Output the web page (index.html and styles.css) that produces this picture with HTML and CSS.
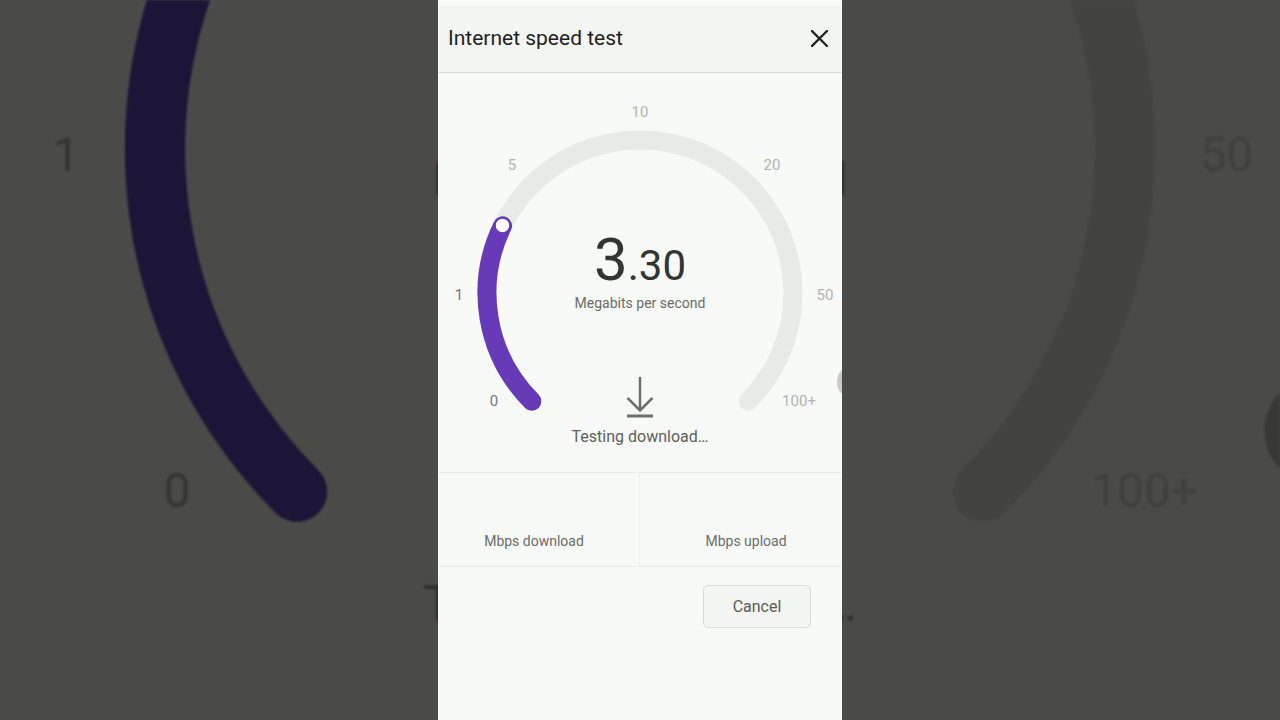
FILE: index.html
```html
<!DOCTYPE html>
<html lang="en">
<head>
<meta charset="utf-8">
<title>Internet speed test</title>
<link rel="stylesheet" href="styles.css">
</head>
<body>
<svg class="backdrop" viewBox="0 0 1280 720" width="1280" height="720" aria-hidden="true">
  <g transform="translate(640 155) scale(3.17) translate(-640 -295)">
    <path d="M531.81 401.19 A153 153 0 1 1 748.19 401.19" fill="none" stroke="#434441" stroke-width="19" stroke-linecap="round"/>
    <path d="M531.81 401.19 A153 153 0 0 1 502.5 225.9" fill="none" stroke="#1e1437" stroke-width="19" stroke-linecap="round"/>
    <circle cx="854" cy="382" r="17" fill="#383937"/>
    <g class="bg-labels">
      <text x="459" y="295" class="bg-on">1</text>
      <text x="494" y="401" class="bg-on">0</text>
      <text x="825" y="295" class="bg-off">50</text>
      <text x="799" y="401" class="bg-off">100+</text>
    </g>
    <text x="640" y="307.5" class="bg-unit">Megabits per second</text>
    <text x="640" y="442" class="bg-status">Testing download…</text>
  </g>
</svg>

<main class="phone">
  <div class="strip"></div>
  <header class="bar">
    <h1 class="title">Internet speed test</h1>
    <button class="close" aria-label="Close">
      <svg width="17" height="17" viewBox="0 0 17 17"><path d="M1 1 L16 16 M16 1 L1 16" stroke="#222" stroke-width="2.3" stroke-linecap="square"/></svg>
    </button>
  </header>

  <section class="gauge">
    <svg class="dial" width="404" height="399" viewBox="438 73 404 399">
      <path d="M531.81 401.19 A153 153 0 1 1 748.19 401.19" fill="none" stroke="#e8eae7" stroke-width="19" stroke-linecap="round"/>
      <path d="M531.81 401.19 A153 153 0 0 1 502.5 225.9" fill="none" stroke="#673ab7" stroke-width="19" stroke-linecap="round"/>
      <circle cx="502.5" cy="225.4" r="7.5" fill="#ffffff" stroke="#673ab7" stroke-width="1.5"/>
      <circle cx="854" cy="382" r="17" fill="#c9cac8"/>
      <g class="ticks">
        <text x="494" y="401" class="on">0</text>
        <text x="459" y="295" class="on">1</text>
        <text x="512" y="165">5</text>
        <text x="640" y="112">10</text>
        <text x="772" y="165">20</text>
        <text x="825" y="295">50</text>
        <text x="799" y="401">100+</text>
      </g>
    </svg>
    <div class="readout">
      <div class="value">3<span class="frac">.30</span></div>
      <div class="unit">Megabits per second</div>
      <svg class="dl-icon" width="28" height="42" viewBox="0 0 28 42">
        <path d="M14 0 V33.5 M1.5 21 L14 33.5 L26.5 21" fill="none" stroke="#6b706d" stroke-width="2.5"/>
        <path d="M1 39 H27" stroke="#6b706d" stroke-width="3"/>
      </svg>
      <div class="status">Testing download…</div>
    </div>
  </section>

  <section class="stats">
    <div class="stat stat-down"><span class="stat-label">Mbps download</span></div>
    <div class="stat stat-up"><span class="stat-label">Mbps upload</span></div>
  </section>

  <footer class="actions">
    <button class="cancel">Cancel</button>
  </footer>
</main>
</body>
</html>
```

FILE: styles.css
```css
html, body {
  margin: 0;
  padding: 0;
  height: 100%;
}

body {
  background: #4a4b48;
  font-family: Roboto, "Noto Sans", "Liberation Sans", sans-serif;
  display: flex;
  justify-content: center;
  overflow: hidden;
  position: relative;
}

.backdrop {
  position: absolute;
  left: 0;
  top: 0;
  filter: blur(0.8px);
}

.bg-labels text,
.bg-unit,
.bg-status {
  font-family: Roboto, "Noto Sans", sans-serif;
  text-anchor: middle;
  dominant-baseline: central;
}

.bg-labels text { font-size: 15px; }
.bg-on { fill: #343533; }
.bg-off { fill: #40413e; }

.bg-unit {
  font-size: 14px;
  fill: #2f302e;
  dominant-baseline: auto;
}

.bg-status {
  font-size: 16px;
  fill: #2f302e;
  dominant-baseline: auto;
}

.phone {
  position: relative;
  z-index: 1;
  width: 404px;
  height: 720px;
  background: #f7faf6;
  display: flex;
  flex-direction: column;
  overflow: hidden;
}

.strip {
  height: 6px;
  background: #f9fbf9;
}

.bar {
  height: 66px;
  background: #f2f5f2;
  border-bottom: 1px solid #d8dbd8;
  display: flex;
  align-items: center;
  justify-content: space-between;
  padding: 0 14px 0 10px;
}

.title {
  margin: 0;
  font-size: 21px;
  font-weight: 400;
  color: #1f1f1f;
  line-height: 24px;
  padding-bottom: 3px;
}

.close {
  border: 0;
  background: none;
  padding: 0;
  width: 17px;
  height: 17px;
  display: flex;
  margin-bottom: 2px;
}

.gauge {
  height: 399px;
  display: grid;
}

.gauge > * {
  grid-area: 1 / 1;
}

.ticks text {
  font-family: Roboto, "Noto Sans", sans-serif;
  font-size: 15px;
  fill: #b2b3b1;
  text-anchor: middle;
  dominant-baseline: central;
}

.ticks text.on {
  fill: #767776;
}

.readout {
  display: flex;
  flex-direction: column;
  align-items: center;
  padding-top: 157px;
}

.value {
  font-size: 60px;
  line-height: 60px;
  color: #333533;
  height: 60px;
}

.frac {
  font-size: 42px;
  line-height: 1;
}

.unit {
  margin-top: 5px;
  font-size: 14px;
  line-height: 16px;
  color: #6b6c6b;
}

.dl-icon {
  margin-top: 66px;
  display: block;
}

.status {
  margin-top: 8px;
  font-size: 16px;
  line-height: 20px;
  color: #5e605e;
}

.stats {
  display: grid;
  grid-template-columns: 1fr 1fr;
  height: 93px;
  border-top: 1px solid #eceeeb;
  border-bottom: 1px solid #eceeeb;
}

.stat {
  display: flex;
  align-items: flex-end;
  justify-content: center;
  padding-bottom: 17px;
}

.stat-down {
  border-right: 1px solid #eef0ed;
  padding-right: 9px;
}

.stat-up {
  padding-left: 10px;
}

.stat-label {
  font-size: 14px;
  line-height: 16px;
  color: #6b6c6b;
}

.actions {
  display: flex;
  justify-content: flex-end;
  padding: 18px 31px 0 0;
}

.cancel {
  width: 108px;
  height: 43px;
  box-sizing: border-box;
  border: 1px solid #d8dbd8;
  border-radius: 5px;
  background: #f2f5f2;
  font-family: Roboto, "Noto Sans", sans-serif;
  font-size: 16px;
  color: #5a5b5a;
  padding: 0;
}
```
